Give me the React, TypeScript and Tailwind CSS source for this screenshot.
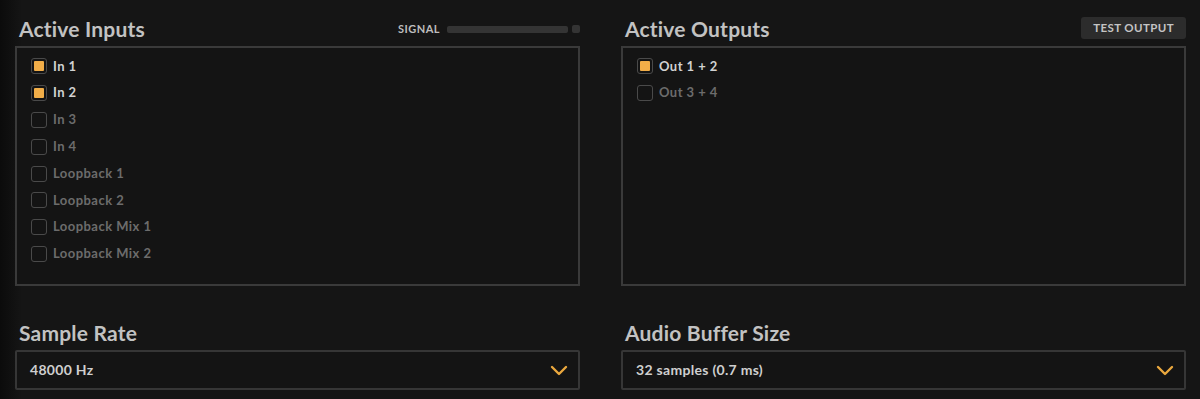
import { useState } from "react";

const font = { fontFamily: "Lato, 'Noto Sans', sans-serif" };

type Item = { label: string; on: boolean };

const initialInputs: Item[] = [
  { label: "In 1", on: true },
  { label: "In 2", on: true },
  { label: "In 3", on: false },
  { label: "In 4", on: false },
  { label: "Loopback 1", on: false },
  { label: "Loopback 2", on: false },
  { label: "Loopback Mix 1", on: false },
  { label: "Loopback Mix 2", on: false },
];

const initialOutputs: Item[] = [
  { label: "Out 1 + 2", on: true },
  { label: "Out 3 + 4", on: false },
];

function CheckRow({ item, onToggle }: { item: Item; onToggle: () => void }) {
  return (
    <button onClick={onToggle} className="flex h-[26.8px] items-center gap-[6px] text-left">
      <span className="flex h-[16px] w-[16px] items-center justify-center rounded-[3px] border-[1.5px] border-[#4a4a4a]">
        {item.on && <span className="h-[10px] w-[10px] rounded-[1px] bg-[#f2ae48]" />}
      </span>
      <span
        className={
          "text-[13px] font-bold tracking-[0.45px] " +
          (item.on ? "text-[#d2d2d2]" : "text-[#6c6c6c]")
        }
      >
        {item.label}
      </span>
    </button>
  );
}

function CheckList({ items, setItems }: { items: Item[]; setItems: (v: Item[]) => void }) {
  return (
    <div className="flex h-[240px] flex-col border-2 border-[#3a3a3a] bg-[#141414] px-[14px] pt-[5px]">
      {items.map((it, i) => (
        <CheckRow
          key={it.label}
          item={it}
          onToggle={() => setItems(items.map((x, j) => (j === i ? { ...x, on: !x.on } : x)))}
        />
      ))}
    </div>
  );
}

function Select({ value }: { value: string }) {
  return (
    <div className="flex h-[40px] items-center justify-between rounded-[2px] border-2 border-[#363636] bg-[#141414] pl-[13px] pr-[10px]">
      <span className="pb-[1px] text-[14px] font-bold tracking-[0.3px] text-[#cfcfcf]">{value}</span>
      <svg width="18" height="11" viewBox="0 0 18 11" fill="none">
        <path d="M2 2l7 7 7-7" stroke="#eaa83e" strokeWidth="2.4" strokeLinecap="round" strokeLinejoin="round" />
      </svg>
    </div>
  );
}

export default function App() {
  const [inputs, setInputs] = useState(initialInputs);
  const [outputs, setOutputs] = useState(initialOutputs);

  return (
    <div
      style={font}
      className="grid h-[399px] w-[1200px] grid-cols-2 gap-x-[41px] overflow-hidden bg-[linear-gradient(to_right,#0b0b0b,#151515_22px)] pl-[15px] pr-[14px]"
    >
      <div className="flex flex-col">
        <div className="flex h-[46px] items-center justify-between pl-[4px] pt-[12px]">
          <h2 className="text-[21px] font-bold tracking-[0.2px] text-[#c2c2c2]">Active Inputs</h2>
          <div className="flex items-center">
            <span className="mr-[7px] text-[11px] font-bold tracking-[0.5px] text-[#bdbdbd]">SIGNAL</span>
            <div className="h-[7px] w-[121px] rounded-[2px] bg-[#343434]" />
            <div className="ml-[4px] h-[8px] w-[8px] rounded-[2px] bg-[#343434]" />
          </div>
        </div>
        <CheckList items={inputs} setItems={setInputs} />
        <h2 className="mt-[35px] pl-[4px] text-[21px] leading-[24px] font-bold tracking-[0.2px] text-[#c2c2c2]">
          Sample Rate
        </h2>
        <div className="mt-[5px]">
          <Select value="48000 Hz" />
        </div>
      </div>
      <div className="flex flex-col">
        <div className="flex h-[46px] items-center justify-between pl-[4px] pt-[12px]">
          <h2 className="text-[21px] font-bold tracking-[0.2px] text-[#c2c2c2]">Active Outputs</h2>
          <button className="mb-[2px] h-[22px] rounded-[3px] bg-[#2c2c2c] px-[12px] text-[11.5px] font-bold tracking-[0.4px] text-[#c4c4c4]">
            TEST OUTPUT
          </button>
        </div>
        <CheckList items={outputs} setItems={setOutputs} />
        <h2 className="mt-[35px] pl-[4px] text-[21px] leading-[24px] font-bold tracking-[0.2px] text-[#c2c2c2]">
          Audio Buffer Size
        </h2>
        <div className="mt-[5px]">
          <Select value="32 samples (0.7 ms)" />
        </div>
      </div>
    </div>
  );
}
